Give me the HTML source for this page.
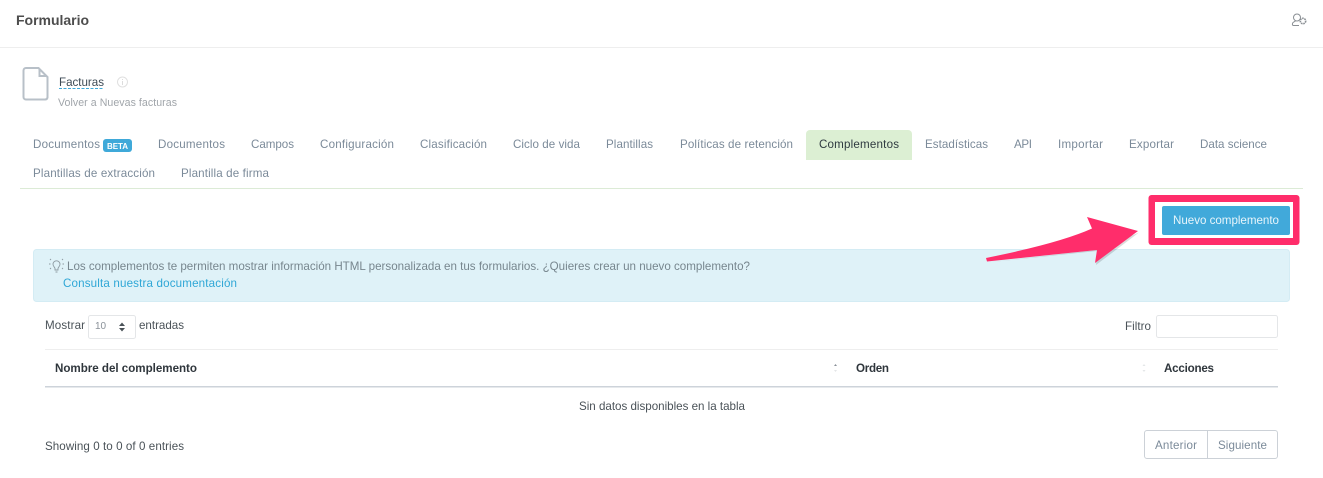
<!DOCTYPE html>
<html lang="es">
<head>
<meta charset="utf-8">
<title>Formulario</title>
<style>
html,body{margin:0;padding:0;width:1323px;height:478px;overflow:hidden;background:#fff}
svg{display:block}
text{font-family:"Liberation Sans",sans-serif;font-size:11.6px;white-space:pre}
.tab{fill:#7b8a99}
.dark{fill:#4a5258}
.b{font-weight:bold;fill:#2f363c}
</style>
</head>
<body>
<svg xmlns="http://www.w3.org/2000/svg" width="1323" height="478" viewBox="0 0 1323 478">
<rect width="1323" height="478" fill="#fff"/>
<!-- header -->
<text x="16" y="25" textLength="73" style="font-size:14px;font-weight:bold;fill:#4d4d4d">Formulario</text>
<rect x="0" y="47" width="1323" height="1" fill="#eeeeee"/>
<g fill="none" stroke="#8a8f94" stroke-width="1">
<circle cx="1297" cy="17.500" r="3.500"/>
<path d="M1299 25.500h-5.500c-1.500 0-1.500-2.500 0-3.300l2-1.200"/>
<circle cx="1303" cy="21" r="2.700" stroke-dasharray="1.600 .7" stroke-width="1.600"/>
</g>
<!-- file icon -->
<path d="M26 68h12.500l9 9v20.500a2.500 2.500 0 0 1-2.500 2h-19a2.500 2.500 0 0 1-2.500-2.500v-26.500a2.500 2.500 0 0 1 2.500-2.500z" fill="#fff" stroke="#b8c0c8" stroke-width="2"/>
<path d="M38.500 68v9h9z" fill="#b8c0c8"/>
<path d="M40.500 71.500v3.500h3.500z" fill="#fff"/>
<text x="59" y="86" textLength="45" style="fill:#3d4a55">Facturas</text>
<line x1="59" y1="88.500" x2="104" y2="88.500" stroke="#3fa9d9" stroke-width="1" stroke-dasharray="3 1.500"/>
<circle cx="122.500" cy="82" r="5" fill="none" stroke="#e0e0e0" stroke-width="1"/>
<rect x="122" y="81" width="1" height="4" fill="#dcdcdc"/><rect x="122" y="79" width="1" height="1" fill="#dcdcdc"/>
<text x="58" y="106" textLength="119" style="font-size:10.6px;fill:#a0a5aa">Volver a Nuevas facturas</text>
<!-- tabs -->
<path d="M806 134a4 4 0 0 1 4-4h98a4 4 0 0 1 4 4v26h-106z" fill="#dcefd3"/>
<g class="tabs">
<text class="tab" x="33" y="148" textLength="67">Documentos</text>
<rect x="103" y="139" width="29" height="13" rx="3" fill="#3fa9d9"/>
<text x="107" y="149" textLength="21" style="font-size:8px;font-weight:bold;fill:#fff">BETA</text>
<text class="tab" x="158" y="148" textLength="67">Documentos</text>
<text class="tab" x="251" y="148" textLength="43">Campos</text>
<text class="tab" x="320" y="148" textLength="74">Configuración</text>
<text class="tab" x="420" y="148" textLength="67">Clasificación</text>
<text class="tab" x="513" y="148" textLength="67">Ciclo de vida</text>
<text class="tab" x="606" y="148" textLength="47">Plantillas</text>
<text class="tab" x="680" y="148" textLength="113">Políticas de retención</text>
<text x="819" y="148" textLength="80" style="fill:#2f3a40">Complementos</text>
<text class="tab" x="925" y="148" textLength="63">Estadísticas</text>
<text class="tab" x="1014" y="148" textLength="18">API</text>
<text class="tab" x="1058" y="148" textLength="45">Importar</text>
<text class="tab" x="1129" y="148" textLength="45">Exportar</text>
<text class="tab" x="1200" y="148" textLength="67">Data science</text>
<text class="tab" x="33" y="177" textLength="122">Plantillas de extracción</text>
<text class="tab" x="181" y="177" textLength="88">Plantilla de firma</text>
</g>
<rect x="20" y="188" width="1283" height="1" fill="#dcebd6"/>
<!-- alert -->
<rect x="33.500" y="249.500" width="1256" height="52" rx="3" fill="#dff2f8" stroke="#d4ecf4"/>
<g fill="none" stroke="#8d9aa1" stroke-width=".9">
<path d="M55 270v-1.500c0-1.200-2-2-2-4.200a3.500 3.500 0 0 1 7 0c0 2.200-2 3-2 4.200v1.500z"/>
<path d="M55.500 272h2M51 260l-1-1M62 260l1-1M50.500 264h-1.500M62.500 264h1.500M51 268l-1 1M62 268l1 1"/>
</g>
<text x="67" y="270" textLength="683" style="fill:#77868e">Los complementos te permiten mostrar información HTML personalizada en tus formularios. ¿Quieres crear un nuevo complemento?</text>
<text x="63" y="287" textLength="174" style="fill:#2fa7d6">Consulta nuestra documentación</text>
<!-- annotated button -->
<rect x="1148.500" y="195" width="151" height="50" rx="3" fill="#ff2d6b"/>
<rect x="1155" y="202" width="138" height="36" fill="#fff"/>
<rect x="1162" y="206" width="128" height="29" rx="2" fill="#41a9da"/>
<text x="1173" y="224" textLength="106" style="fill:#e8f5fb">Nuevo complemento</text>
<!-- arrow -->
<path d="M987 262.500L1097 251L1096 265L1139 232.500L1097 250z" fill="#000" opacity=".14"/>
<path d="M986 258Q1060 243 1092 228.500L1087 217L1138 231L1095 263L1097 250L987 261.500z" fill="#ff2d6b"/>
<!-- table controls -->
<text class="dark" x="45" y="329" textLength="40">Mostrar</text>
<rect x="88.500" y="315.500" width="47" height="23" rx="2" fill="#fff" stroke="#e4e6e8"/>
<text x="95" y="329" textLength="11" style="font-size:10px;fill:#8a9199">10</text>
<path d="M119 326l3-3.500 3 3.500zM119 328l3 3.500 3-3.500z" fill="#4a5258"/>
<text class="dark" x="139" y="329" textLength="45">entradas</text>
<text class="dark" x="1125" y="330" textLength="26">Filtro</text>
<rect x="1156.500" y="315.500" width="121" height="22" rx="2" fill="#fff" stroke="#e4e6e8"/>
<rect x="45" y="349" width="1233" height="1" fill="#eeeeee"/>
<text class="b" x="55" y="372" textLength="142">Nombre del complemento</text>
<text class="b" x="856" y="372" textLength="33">Orden</text>
<text class="b" x="1164" y="372" textLength="50">Acciones</text>
<path d="M834 366l1.500-2 1.500 2z" fill="#8a9199"/><path d="M834 370l1.500 2 1.500-2z" fill="#e4e6e8"/>
<path d="M1142.500 366l1.500-2 1.500 2zM1142.500 370l1.500 2 1.500-2z" fill="#e4e6e8"/>
<rect x="45" y="386" width="1233" height="1.500" fill="#cdd3da"/>
<text class="dark" x="579" y="410" textLength="166">Sin datos disponibles en la tabla</text>
<text class="dark" x="45" y="450" textLength="139">Showing 0 to 0 of 0 entries</text>
<rect x="1144.500" y="430.500" width="133" height="28" rx="2.500" fill="#fff" stroke="#ccd1d7"/>
<rect x="1207" y="431" width="1" height="27" fill="#ccd1d7"/>
<text class="tab" x="1155" y="449" textLength="42">Anterior</text>
<text class="tab" x="1218" y="449" textLength="49">Siguiente</text>
</svg>
</body>
</html>
